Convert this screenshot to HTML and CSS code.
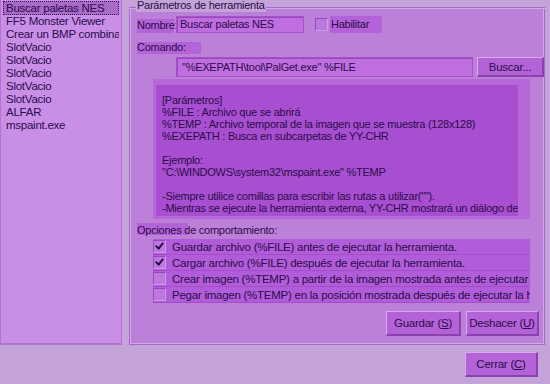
FILE: index.html
```html
<!DOCTYPE html>
<html lang="es">
<head>
  <meta charset="UTF-8" />
  <title>Herramientas externas</title>
  <link rel="stylesheet" href="styles.css">
</head>
<body>
  <div class="window">
    <div class="main">
      <!-- tool list -->
      <ul class="tool-list">
        <li class="selected">Buscar paletas NES</li>
        <li>FF5 Monster Viewer</li>
        <li>Crear un BMP combinado</li>
        <li>SlotVacio</li>
        <li>SlotVacio</li>
        <li>SlotVacio</li>
        <li>SlotVacio</li>
        <li>SlotVacio</li>
        <li>ALFAR</li>
        <li>mspaint.exe</li>
      </ul>

      <fieldset class="group">
        <legend>Parámetros de herramienta</legend>

        <div class="row name-row">
          <span class="label hl name-label">Nombre:</span>
          <span class="input name-input">Buscar paletas NES</span>
          <span class="check"></span>
          <span class="label hl enable-label">Habilitar</span>
        </div>

        <div class="row">
          <span class="label hl cmd-label">Comando:</span>
        </div>

        <div class="row cmd-row">
          <span class="input cmd-input">"%EXEPATH\tool\PalGet.exe" %FILE</span>
          <span class="btn browse-btn">Buscar...</span>
        </div>

        <div class="help-box">
          <div class="help-text">
            <p>[Parámetros]</p>
            <p>%FILE : Archivo que se abrirá</p>
            <p>%TEMP : Archivo temporal de la imagen que se muestra (128x128)</p>
            <p>%EXEPATH : Busca en subcarpetas de YY-CHR</p>
            <p>&nbsp;</p>
            <p>Ejemplo:</p>
            <p>"C:\WINDOWS\system32\mspaint.exe" %TEMP</p>
            <p>&nbsp;</p>
            <p>-Siempre utilice comillas para escribir las rutas a utilizar("").</p>
            <p>-Mientras se ejecute la herramienta externa, YY-CHR mostrará un diálogo de</p>
          </div>
          <div class="scroll-track"></div>
        </div>

        <div class="row opts-title">
          <span class="label opts-label">Opciones de comportamiento:</span>
        </div>

        <div class="options">
          <div class="opt"><span class="check checked"></span><span>Guardar archivo (%FILE) antes de ejecutar la herramienta.</span></div>
          <div class="opt"><span class="check checked"></span><span>Cargar archivo (%FILE) después de ejecutar la herramienta.</span></div>
          <div class="opt"><span class="check"></span><span>Crear imagen (%TEMP) a partir de la imagen mostrada antes de ejecutar la herramienta.</span></div>
          <div class="opt"><span class="check"></span><span>Pegar imagen (%TEMP) en la posición mostrada después de ejecutar la herramienta.</span></div>
        </div>

        <div class="actions">
          <span class="btn">Guardar (<u>S</u>)</span>
          <span class="btn">Deshacer (<u>U</u>)</span>
        </div>
      </fieldset>
    </div>

    <div class="footer">
      <span class="btn close-btn">Cerrar (<u>C</u>)</span>
    </div>
  </div>
</body>
</html>
```

FILE: styles.css
```css
/* GLOBAL */
body {
  margin: 0;
  padding: 0;
  font-family: 'Liberation Sans', Arial, sans-serif;
  font-size: 11px;
  letter-spacing: -0.25px;
  color: #2c0c4c;
  background-color: #c4a3d8;
}

.window {
  width: 550px;
  height: 384px;
  overflow: hidden;
}

.main {
  display: flex;
  gap: 7px;
  height: 345px;
}

/* TOOL LIST */
.tool-list {
  list-style: none;
  margin: 0;
  padding: 1px 2px;
  width: 122px;
  box-sizing: border-box;
  background-color: #c98fe7;
  border: 1px solid #b272d4;
  border-top: none;
  border-bottom: 2px solid #b072d0;
  font-size: 11.5px;
}
.tool-list li {
  height: 13px;
  line-height: 13px;
  padding-left: 3px;
  white-space: nowrap;
  overflow: hidden;
}
.tool-list li.selected {
  background-color: #a96ac8;
  outline: 1px dotted #3a1a58;
  outline-offset: -1px;
  height: 14px;
  line-height: 14px;
}

/* GROUP BOX */
.group {
  width: 416px;
  box-sizing: border-box;
  margin: 0;
  padding: 1px 0 0 7px;
  border: 1px solid #a767cc;
  border-top: none;
  background-color: #bd80d9;
  box-shadow: inset 1px 0 0 #d2a6ea, inset -1px -1px 0 #d2a6ea;
  position: relative;
}
.group legend {
  position: absolute;
  top: -1px;
  left: 6px;
  padding: 0 1px;
  line-height: 13px;
  background-color: #c4a3d8;
}
.group::before {
  content: '';
  position: absolute;
  left: -1px;
  right: -1px;
  top: 0;
  height: 7px;
  background-color: #c4a3d8;
  border-bottom: 1px solid #a767cc;
  box-shadow: 0 1px 0 #d2a6ea;
}

.row {
  display: flex;
  align-items: center;
  position: relative;
}
.label {
  line-height: 14px;
}
.hl {
  background-color: #b462d7;
}

.name-row {
  margin-top: 15px;
  height: 17px;
}
.name-label {
  align-self: flex-end;
  width: 37px;
  height: 14px;
  line-height: 12px;
}
.input {
  display: block;
  box-sizing: border-box;
  background-color: #bf6ee0;
  border: 1px solid #a452c8;
  box-shadow: inset 1px 1px 0 #9a48be;
  padding-left: 3px;
  white-space: nowrap;
  overflow: hidden;
}
.name-input {
  margin-left: 2px;
  width: 128px;
  height: 17px;
  line-height: 15px;
}
.name-row .check {
  margin-left: 11px;
}
.enable-label {
  margin-left: 2px;
  padding-left: 1px;
  width: 51px;
  height: 17px;
  line-height: 17px;
}

.cmd-label {
  margin-top: 9px;
  width: 64px;
  height: 12px;
  line-height: 11px;
}

.cmd-row {
  margin-top: 3px;
  height: 20px;
}
.cmd-input {
  margin-left: 39px;
  width: 297px;
  height: 20px;
  line-height: 18px;
  padding-left: 5px;
}

/* BUTTONS */
.btn {
  display: inline-flex;
  align-items: center;
  justify-content: center;
  box-sizing: border-box;
  background-color: #b462d8;
  border-top: 1px solid #d8aaf0;
  border-left: 1px solid #d8aaf0;
  border-right: 2px solid #8a42ac;
  border-bottom: 2px solid #8a42ac;
  white-space: nowrap;
  font-size: 11.5px;
}
.browse-btn {
  margin-left: 4px;
  width: 67px;
  height: 20px;
}

/* HELP BOX */
.help-box {
  display: flex;
  margin: 2px 0 0 16px;
  width: 377px;
  height: 140px;
  box-sizing: border-box;
  background-color: #b668d9;
  padding: 6px 0 3px 3px;
}
.help-text {
  flex: 1;
  background-color: #a84ed0;
  padding: 9px 0 0 6px;
  overflow: hidden;
}
.help-text p {
  margin: 0;
  height: 12px;
  line-height: 12px;
  white-space: nowrap;
}
.scroll-track {
  width: 12px;
}

/* OPTIONS */
.opts-title {
  margin-top: 4px;
  height: 14px;
}
.opts-label {
  background: linear-gradient(to right, #b462d7 51px, transparent 51px) no-repeat 0 0 / 100% 12px;
}

.options {
  margin: 2px 0 0 16px;
  width: 377px;
  overflow: hidden;
}
.opt {
  display: flex;
  align-items: center;
  height: 15px;
  border-bottom: 1px solid #a44ccc;
  background-color: #b15cd8;
  white-space: nowrap;
  font-size: 11.5px;
}
.opt .check {
  margin-right: 6px;
  flex-shrink: 0;
}

.check {
  display: inline-block;
  position: relative;
  width: 13px;
  height: 13px;
  box-sizing: border-box;
  background-color: #bd78df;
  border-top: 1px solid #9a48c0;
  border-left: 1px solid #9a48c0;
  border-right: 1px solid #cf9cec;
  border-bottom: 1px solid #cf9cec;
}
.check.checked::after {
  content: '';
  position: absolute;
  left: 3px;
  top: 0px;
  width: 3px;
  height: 6px;
  border-right: 2px solid #2c0c4c;
  border-bottom: 2px solid #2c0c4c;
  transform: rotate(40deg);
}

.actions {
  display: flex;
  justify-content: flex-end;
  gap: 5px;
  margin-top: 8px;
  padding-right: 5px;
}
.actions .btn {
  height: 25px;
}
.actions .btn:first-child {
  width: 75px;
}
.actions .btn:last-child {
  width: 73px;
}

/* FOOTER */
.footer {
  display: flex;
  justify-content: flex-end;
  padding: 7px 12px 0 0;
}
.close-btn {
  width: 73px;
  height: 25px;
}
```
